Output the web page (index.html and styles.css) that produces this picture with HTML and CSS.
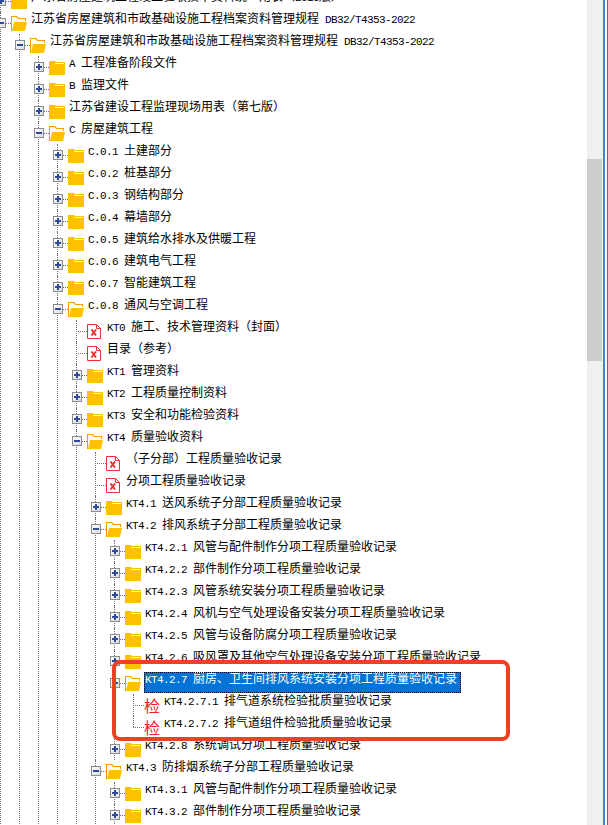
FILE: index.html
```html
<!DOCTYPE html>
<html lang="en">
<head>
    <meta charset="UTF-8">
    <title>工程资料目录</title>
    <link rel="stylesheet" href="styles.css">
</head>
<body>
    <svg class="defs" aria-hidden="true">
        <symbol id="folder" viewBox="0 0 16 15">
            <path fill="#ffc000" d="M0 1h6l1 1h9v13H0z"/>
            <path fill="#fff" d="M6 3h9v1H6z" opacity=".9"/>
        </symbol>
        <symbol id="open" viewBox="0 0 16 15">
            <path fill="#ff9900" d="M0 15V0h6l2 2h7v3h-1V3H7L5 1H1v14z"/>
            <path fill="#fff" d="M1 15V1h4l2 2h7v3H4z"/>
            <path fill="#ffc000" d="M3 6h13l-2 9H1z"/>
        </symbol>
        <symbol id="file" viewBox="0 0 16 15">
            <path fill="#fff" stroke="#f03030" d="M.5.5h9l4 4v10H.5z"/>
            <path fill="none" stroke="#f03030" d="M9.500.5v4h4"/>
            <path fill="none" stroke="#f03030" stroke-width="2" d="M4.500 5.500l4.500 6M9 5.500l-4.500 6"/>
        </symbol>
    </svg>

    <div class="window">
        <div class="pane">
            <ul class="tree">
                <li>
                    <div class="row"><span class="toggle plus"></span><svg class="icon"><use href="#folder"/></svg><span class="label">广东省房屋建筑工程竣工验收技术资料统一用表（<span class="code">2016</span>版）</span></div>
                </li>
                <li>
                    <div class="row"><span class="toggle minus"></span><svg class="icon"><use href="#open"/></svg><span class="label">江苏省房屋建筑和市政基础设施工程档案资料管理规程<span class="code"> DB32/T4353-2022</span></span></div>
                    <ul>
                        <li>
                            <div class="row"><span class="toggle minus"></span><svg class="icon"><use href="#open"/></svg><span class="label">江苏省房屋建筑和市政基础设施工程档案资料管理规程<span class="code"> DB32/T4353-2022</span></span></div>
                            <ul>
                                <li><div class="row"><span class="toggle plus"></span><svg class="icon"><use href="#folder"/></svg><span class="label"><span class="code">A </span>工程准备阶段文件</span></div></li>
                                <li><div class="row"><span class="toggle plus"></span><svg class="icon"><use href="#folder"/></svg><span class="label"><span class="code">B </span>监理文件</span></div></li>
                                <li><div class="row"><span class="toggle plus"></span><svg class="icon"><use href="#folder"/></svg><span class="label">江苏省建设工程监理现场用表（第七版）</span></div></li>
                                <li>
                                    <div class="row"><span class="toggle minus"></span><svg class="icon"><use href="#open"/></svg><span class="label"><span class="code">C </span>房屋建筑工程</span></div>
                                    <ul>
                                        <li><div class="row"><span class="toggle plus"></span><svg class="icon"><use href="#folder"/></svg><span class="label"><span class="code">C.0.1 </span>土建部分</span></div></li>
                                        <li><div class="row"><span class="toggle plus"></span><svg class="icon"><use href="#folder"/></svg><span class="label"><span class="code">C.0.2 </span>桩基部分</span></div></li>
                                        <li><div class="row"><span class="toggle plus"></span><svg class="icon"><use href="#folder"/></svg><span class="label"><span class="code">C.0.3 </span>钢结构部分</span></div></li>
                                        <li><div class="row"><span class="toggle plus"></span><svg class="icon"><use href="#folder"/></svg><span class="label"><span class="code">C.0.4 </span>幕墙部分</span></div></li>
                                        <li><div class="row"><span class="toggle plus"></span><svg class="icon"><use href="#folder"/></svg><span class="label"><span class="code">C.0.5 </span>建筑给水排水及供暖工程</span></div></li>
                                        <li><div class="row"><span class="toggle plus"></span><svg class="icon"><use href="#folder"/></svg><span class="label"><span class="code">C.0.6 </span>建筑电气工程</span></div></li>
                                        <li><div class="row"><span class="toggle plus"></span><svg class="icon"><use href="#folder"/></svg><span class="label"><span class="code">C.0.7 </span>智能建筑工程</span></div></li>
                                        <li>
                                            <div class="row"><span class="toggle minus"></span><svg class="icon"><use href="#open"/></svg><span class="label"><span class="code">C.0.8 </span>通风与空调工程</span></div>
                                            <ul>
                                                <li><div class="row leaf"><svg class="icon"><use href="#file"/></svg><span class="label"><span class="code">KT0 </span>施工、技术管理资料（封面）</span></div></li>
                                                <li><div class="row leaf"><svg class="icon"><use href="#file"/></svg><span class="label">目录（参考）</span></div></li>
                                                <li><div class="row"><span class="toggle plus"></span><svg class="icon"><use href="#folder"/></svg><span class="label"><span class="code">KT1 </span>管理资料</span></div></li>
                                                <li><div class="row"><span class="toggle plus"></span><svg class="icon"><use href="#folder"/></svg><span class="label"><span class="code">KT2 </span>工程质量控制资料</span></div></li>
                                                <li><div class="row"><span class="toggle plus"></span><svg class="icon"><use href="#folder"/></svg><span class="label"><span class="code">KT3 </span>安全和功能检验资料</span></div></li>
                                                <li>
                                                    <div class="row"><span class="toggle minus"></span><svg class="icon"><use href="#open"/></svg><span class="label"><span class="code">KT4 </span>质量验收资料</span></div>
                                                    <ul>
                                                        <li><div class="row leaf"><svg class="icon"><use href="#file"/></svg><span class="label">（子分部）工程质量验收记录</span></div></li>
                                                        <li><div class="row leaf"><svg class="icon"><use href="#file"/></svg><span class="label">分项工程质量验收记录</span></div></li>
                                                        <li><div class="row"><span class="toggle plus"></span><svg class="icon"><use href="#folder"/></svg><span class="label"><span class="code">KT4.1 </span>送风系统子分部工程质量验收记录</span></div></li>
                                                        <li>
                                                            <div class="row"><span class="toggle minus"></span><svg class="icon"><use href="#open"/></svg><span class="label"><span class="code">KT4.2 </span>排风系统子分部工程质量验收记录</span></div>
                                                            <ul>
                                                                <li><div class="row"><span class="toggle plus"></span><svg class="icon"><use href="#folder"/></svg><span class="label"><span class="code">KT4.2.1 </span>风管与配件制作分项工程质量验收记录</span></div></li>
                                                                <li><div class="row"><span class="toggle plus"></span><svg class="icon"><use href="#folder"/></svg><span class="label"><span class="code">KT4.2.2 </span>部件制作分项工程质量验收记录</span></div></li>
                                                                <li><div class="row"><span class="toggle plus"></span><svg class="icon"><use href="#folder"/></svg><span class="label"><span class="code">KT4.2.3 </span>风管系统安装分项工程质量验收记录</span></div></li>
                                                                <li><div class="row"><span class="toggle plus"></span><svg class="icon"><use href="#folder"/></svg><span class="label"><span class="code">KT4.2.4 </span>风机与空气处理设备安装分项工程质量验收记录</span></div></li>
                                                                <li><div class="row"><span class="toggle plus"></span><svg class="icon"><use href="#folder"/></svg><span class="label"><span class="code">KT4.2.5 </span>风管与设备防腐分项工程质量验收记录</span></div></li>
                                                                <li><div class="row"><span class="toggle plus"></span><svg class="icon"><use href="#folder"/></svg><span class="label"><span class="code">KT4.2.6 </span>吸风罩及其他空气处理设备安装分项工程质量验收记录</span></div></li>
                                                                <li>
                                                                    <div class="row"><span class="toggle minus"></span><svg class="icon"><use href="#open"/></svg><span class="label selected"><span class="code">KT4.2.7 </span>厨房、卫生间排风系统安装分项工程质量验收记录</span></div>
                                                                    <ul>
                                                                        <li><div class="row leaf"><span class="icon check">检</span><span class="label"><span class="code">KT4.2.7.1 </span>排气道系统检验批质量验收记录</span></div></li>
                                                                        <li class="end"><div class="row leaf"><span class="icon check">检</span><span class="label"><span class="code">KT4.2.7.2 </span>排气道组件检验批质量验收记录</span></div></li>
                                                                    </ul>
                                                                </li>
                                                                <li><div class="row"><span class="toggle plus"></span><svg class="icon"><use href="#folder"/></svg><span class="label"><span class="code">KT4.2.8 </span>系统调试分项工程质量验收记录</span></div></li>
                                                            </ul>
                                                        </li>
                                                        <li>
                                                            <div class="row"><span class="toggle minus"></span><svg class="icon"><use href="#open"/></svg><span class="label"><span class="code">KT4.3 </span>防排烟系统子分部工程质量验收记录</span></div>
                                                            <ul>
                                                                <li><div class="row"><span class="toggle plus"></span><svg class="icon"><use href="#folder"/></svg><span class="label"><span class="code">KT4.3.1 </span>风管与配件制作分项工程质量验收记录</span></div></li>
                                                                <li><div class="row"><span class="toggle plus"></span><svg class="icon"><use href="#folder"/></svg><span class="label"><span class="code">KT4.3.2 </span>部件制作分项工程质量验收记录</span></div></li>
                                                            </ul>
                                                        </li>
                                                    </ul>
                                                </li>
                                            </ul>
                                        </li>
                                    </ul>
                                </li>
                            </ul>
                        </li>
                    </ul>
                </li>
            </ul>
            <div class="callout"></div>
        </div>
        <div class="scrollbar"><div class="thumb"></div></div>
        <div class="edge"></div>
    </div>
</body>
</html>
```

FILE: styles.css
```css
html, body {
    margin: 0;
    height: 100%;
    overflow: hidden;
    background: white;
}
body {
    font-family: "Noto Sans CJK SC", "Liberation Sans", sans-serif;
    font-size: 12px;
    color: black;
}
.defs {
    display: none;
}
.window {
    display: flex;
    height: 825px;
}
.pane {
    position: relative;
    flex: 1;
    overflow: hidden;
}
.tree {
    margin: -10px 0 0 -4px;
}
.tree, .tree ul {
    padding: 0;
    list-style: none;
}
.tree ul {
    margin: 0 0 0 19px;
}
li {
    position: relative;
}
/* tree guide lines */
li::before {
    content: "";
    position: absolute;
    left: 4px;
    top: 0;
    bottom: 0;
    border-left: 1px dotted #707070;
}
li.end::before {
    bottom: auto;
    height: 11px;
}
.row {
    position: relative;
    display: flex;
    align-items: center;
    height: 22px;
    white-space: pre;
}
.row::before {
    content: "";
    position: absolute;
    left: 4px;
    top: 11px;
    width: 11px;
    border-top: 1px dotted #707070;
}
.row.leaf {
    padding-left: 15px;
}
.toggle {
    position: relative;
    box-sizing: border-box;
    flex: none;
    width: 10px;
    height: 10px;
    margin-right: 5px;
    border: 1px solid #8c8c8c;
    background: linear-gradient(135deg, #fff 0%, #dcdcdc 100%);
}
.toggle::before, .plus::after {
    content: "";
    position: absolute;
    background: #2f4c9c;
}
.toggle::before {
    left: 1px;
    top: 3px;
    width: 6px;
    height: 2px;
}
.plus::after {
    left: 3px;
    top: 1px;
    width: 2px;
    height: 6px;
}
.icon {
    position: relative;
    flex: none;
    display: block;
    width: 16px;
    height: 15px;
    margin-right: 4px;
    background: white;
}
.check {
    height: 16px;
    color: #f02020;
    font-size: 16px;
    line-height: 16px;
    background: none;
}
.label {
    box-sizing: border-box;
    align-self: flex-start;
    height: 21px;
    margin-left: -1px;
    padding-right: 3px;
    border: 1px solid transparent;
    line-height: 9px;
}
.code {
    font-family: "Liberation Mono", monospace;
    font-size: 11px;
    letter-spacing: -0.6px;
}
.selected {
    border: 1px dotted #ff9c1a;
    outline: 1px dotted #000;
    outline-offset: -1px;
    background: #0073d6;
    color: white;
}
.callout {
    position: absolute;
    left: 112px;
    top: 660px;
    box-sizing: border-box;
    width: 398px;
    height: 81px;
    border: 4px solid #ee4023;
    border-radius: 8px;
}
.scrollbar {
    flex: none;
    width: 16px;
    background: #f0f0f0;
}
.thumb {
    width: 15px;
    height: 202px;
    margin-top: 159px;
    background: #cdcdcd;
}
.edge {
    flex: none;
    box-sizing: border-box;
    width: 5px;
    border-left: 2px solid #4a7fd6;
    border-right: 1px solid #6b6b6b;
}
```
